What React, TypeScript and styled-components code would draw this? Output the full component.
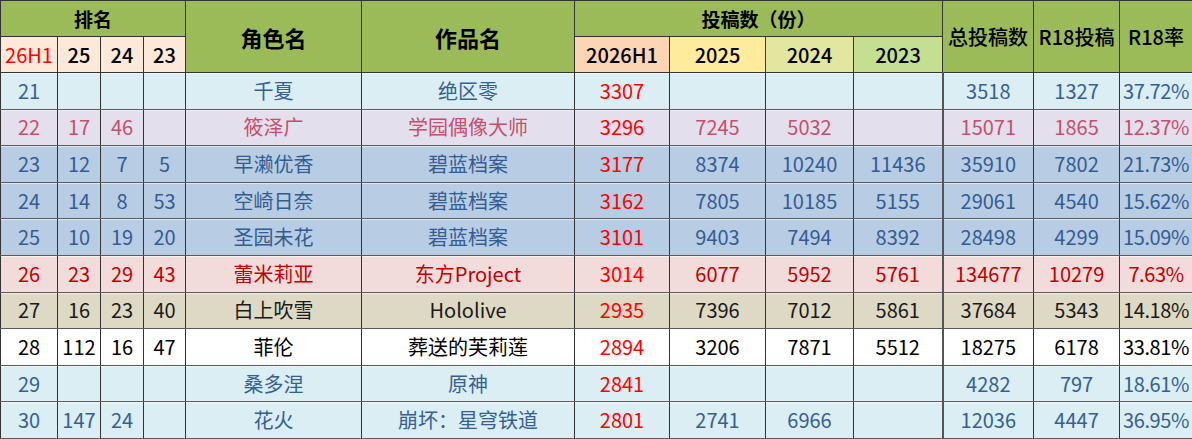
import styled, { createGlobalStyle } from 'styled-components';

const GlobalStyle = createGlobalStyle`
  html, body {
    margin: 0;
    padding: 0;
    background: #ffffff;
    overflow: hidden;
  }
`;

type Tone = 'sky' | 'lilac' | 'blue' | 'rose' | 'sand' | 'plain';

const tones: Record<Tone, { bg: string; fg: string }> = {
  sky: { bg: '#daeef3', fg: '#366092' },
  lilac: { bg: '#e4dfec', fg: '#c4506d' },
  blue: { bg: '#b8cce4', fg: '#335d92' },
  rose: { bg: '#f2dcdb', fg: '#c00000' },
  sand: { bg: '#ddd9c4', fg: '#1a1a1a' },
  plain: { bg: '#ffffff', fg: '#000000' },
};

const widths = [57, 43, 43, 42, 176, 213, 95, 96, 88, 89, 91, 86, 73];

const Sheet = styled.table`
  border-collapse: collapse;
  table-layout: fixed;
  width: 1192px;
  font-family: 'Noto Sans CJK SC', 'Noto Sans', sans-serif;
  border-top: 1px solid #9a9a9a;
`;

const HeadCell = styled.th<{ $bg?: string; $size?: number; $weight?: number; $color?: string }>`
  background: ${p => p.$bg || '#9bbb59'};
  color: ${p => p.$color || '#000000'};
  font-size: ${p => p.$size || 20}px;
  font-weight: ${p => p.$weight || 700};
  border: 1px solid #333333;
  padding: 0;
  text-align: center;
  white-space: nowrap;
  overflow: hidden;
  line-height: 1;
`;

const HeadRow = styled.tr`
  height: 36px;
`;

const DataRow = styled.tr<{ $tone: Tone }>`
  height: 36.6px;
  background: ${p => tones[p.$tone].bg};
  color: ${p => tones[p.$tone].fg};
`;

const Cell = styled.td<{ $hot?: boolean; $thick?: boolean }>`
  border-left: ${p => (p.$thick ? '2px solid #555555' : '1px solid #333333')};
  border-right: 1px solid #333333;
  border-top: 1px solid #5a5a5a;
  border-bottom: 1px solid #5a5a5a;
  box-shadow: inset 0 1px 0 rgba(255, 255, 255, 0.55);
  padding: 0;
  text-align: center;
  font-size: 20px;
  font-weight: 400;
  line-height: 1;
  white-space: nowrap;
  overflow: hidden;
  color: ${p => (p.$hot ? '#ff0000' : 'inherit')};
`;

const Rate = styled.span`
  display: inline-block;
  letter-spacing: -0.4px;
`;

type Row = {
  ranks: string[];
  name: string;
  work: string;
  h1: string;
  years: string[];
  total: string;
  r18: string;
  rate: string;
  tone: Tone;
};

const rows: Row[] = [
  { ranks: ['21', '', '', ''], name: '千夏', work: '绝区零', h1: '3307', years: ['', '', ''], total: '3518', r18: '1327', rate: '37.72%', tone: 'sky' },
  { ranks: ['22', '17', '46', ''], name: '筱泽广', work: '学园偶像大师', h1: '3296', years: ['7245', '5032', ''], total: '15071', r18: '1865', rate: '12.37%', tone: 'lilac' },
  { ranks: ['23', '12', '7', '5'], name: '早濑优香', work: '碧蓝档案', h1: '3177', years: ['8374', '10240', '11436'], total: '35910', r18: '7802', rate: '21.73%', tone: 'blue' },
  { ranks: ['24', '14', '8', '53'], name: '空崎日奈', work: '碧蓝档案', h1: '3162', years: ['7805', '10185', '5155'], total: '29061', r18: '4540', rate: '15.62%', tone: 'blue' },
  { ranks: ['25', '10', '19', '20'], name: '圣园未花', work: '碧蓝档案', h1: '3101', years: ['9403', '7494', '8392'], total: '28498', r18: '4299', rate: '15.09%', tone: 'blue' },
  { ranks: ['26', '23', '29', '43'], name: '蕾米莉亚', work: '东方Project', h1: '3014', years: ['6077', '5952', '5761'], total: '134677', r18: '10279', rate: '7.63%', tone: 'rose' },
  { ranks: ['27', '16', '23', '40'], name: '白上吹雪', work: 'Hololive', h1: '2935', years: ['7396', '7012', '5861'], total: '37684', r18: '5343', rate: '14.18%', tone: 'sand' },
  { ranks: ['28', '112', '16', '47'], name: '菲伦', work: '葬送的芙莉莲', h1: '2894', years: ['3206', '7871', '5512'], total: '18275', r18: '6178', rate: '33.81%', tone: 'plain' },
  { ranks: ['29', '', '', ''], name: '桑多涅', work: '原神', h1: '2841', years: ['', '', ''], total: '4282', r18: '797', rate: '18.61%', tone: 'sky' },
  { ranks: ['30', '147', '24', ''], name: '花火', work: '崩坏：星穹铁道', h1: '2801', years: ['2741', '6966', ''], total: '12036', r18: '4447', rate: '36.95%', tone: 'sky' },
];

export default function App() {
  return (
    <>
      <GlobalStyle />
      <Sheet>
        <colgroup>
          {widths.map((w, i) => (
            <col key={i} style={{ width: w }} />
          ))}
        </colgroup>
        <thead>
          <HeadRow>
            <HeadCell colSpan={4} $size={19}>排名</HeadCell>
            <HeadCell rowSpan={2} $size={22}>角色名</HeadCell>
            <HeadCell rowSpan={2} $size={22}>作品名</HeadCell>
            <HeadCell colSpan={4} $size={19}>投稿数（份）</HeadCell>
            <HeadCell rowSpan={2} $size={20} $weight={500}>总投稿数</HeadCell>
            <HeadCell rowSpan={2} $size={20} $weight={500}>R18投稿</HeadCell>
            <HeadCell rowSpan={2} $size={20} $weight={500}>R18率</HeadCell>
          </HeadRow>
          <HeadRow>
            <HeadCell $bg="#fde9d9" $color="#ff0000" $weight={400}>26H1</HeadCell>
            <HeadCell $bg="#fde9d9" $weight={500}>25</HeadCell>
            <HeadCell $bg="#fde9d9" $weight={500}>24</HeadCell>
            <HeadCell $bg="#fde9d9" $weight={500}>23</HeadCell>
            <HeadCell $bg="#fcd5b4" $weight={500}>2026H1</HeadCell>
            <HeadCell $bg="#ffeb9c" $weight={500}>2025</HeadCell>
            <HeadCell $bg="#e2e69e" $weight={500}>2024</HeadCell>
            <HeadCell $bg="#c4df90" $weight={500}>2023</HeadCell>
          </HeadRow>
        </thead>
        <tbody>
          {rows.map(r => (
            <DataRow key={r.ranks[0]} $tone={r.tone}>
              {r.ranks.map((v, i) => (
                <Cell key={i}>{v}</Cell>
              ))}
              <Cell>{r.name}</Cell>
              <Cell>{r.work}</Cell>
              <Cell $hot>{r.h1}</Cell>
              {r.years.map((v, i) => (
                <Cell key={i}>{v}</Cell>
              ))}
              <Cell $thick>{r.total}</Cell>
              <Cell>{r.r18}</Cell>
              <Cell>
                <Rate>{r.rate}</Rate>
              </Cell>
            </DataRow>
          ))}
        </tbody>
      </Sheet>
    </>
  );
}
